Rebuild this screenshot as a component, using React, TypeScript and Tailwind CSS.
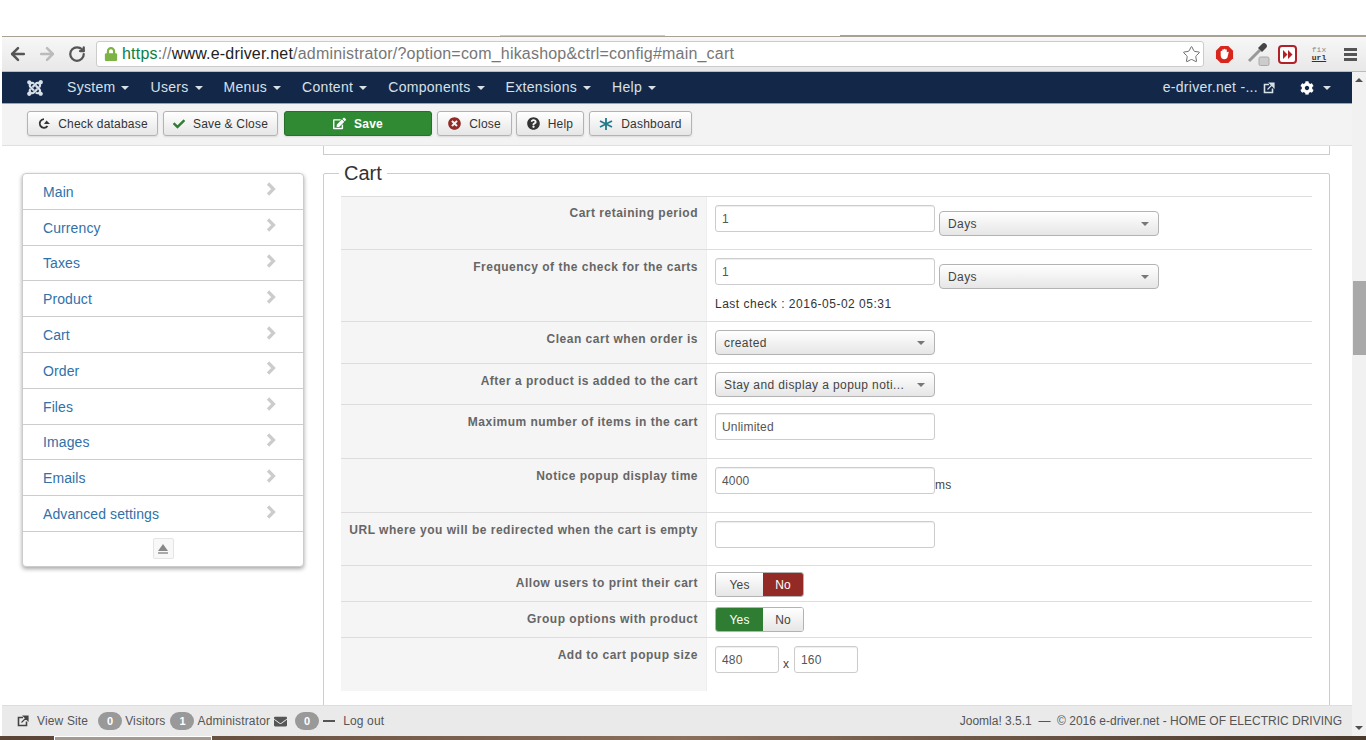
import { ArrowLeft, ArrowRight, RotateCw, Star } from 'lucide-react'
import { FaJoomla, FaCheck, FaEdit, FaTimesCircle, FaQuestionCircle, FaCog, FaEnvelope, FaLock } from 'react-icons/fa'

const NAV = ['System', 'Users', 'Menus', 'Content', 'Components', 'Extensions', 'Help']
const SIDE = ['Main', 'Currency', 'Taxes', 'Product', 'Cart', 'Order', 'Files', 'Images', 'Emails', 'Advanced settings']

function Caret({ className = 'border-t-[#d8e0e8]' }: { className?: string }) {
  return <span className={`inline-block w-0 h-0 border-x-[4px] border-x-transparent border-t-[4px] ${className}`} />
}

function OutIcon({ className }: { className: string }) {
  return (
    <svg width="12" height="12" viewBox="0 0 12 12" className={className}>
      <path d="M6 2.500H1.500v8h8V6.500" fill="none" stroke="currentColor" strokeWidth="1.600" />
      <path d="M4.500 7.500 9 3M6.500 1h4.500v4.500z" fill="currentColor" stroke="currentColor" strokeWidth="1.200" />
    </svg>
  )
}

function ToolBtn({ className, icon, label }: { className: string; icon: React.ReactNode; label: string }) {
  return (
    <button className={`h-[25px] flex items-center justify-center gap-[8px] rounded-[3px] border border-[#b3b3b3] bg-gradient-to-b from-white to-[#e6e6e6] text-[12px] tracking-[0.2px] text-[#333] shadow-[0_1px_2px_rgba(0,0,0,0.1)] ${className}`}>
      {icon}
      {label}
    </button>
  )
}

function TextInput({ value, className }: { value: string; className: string }) {
  return (
    <div className={`h-[27px] flex items-center px-[6px] bg-white border border-[#ccc] rounded-[3px] text-[12px] tracking-[0.2px] text-[#555] shadow-[inset_0_1px_1px_rgba(0,0,0,0.07)] ${className}`}>
      {value}
    </div>
  )
}

function Select({ value, className }: { value: string; className: string }) {
  return (
    <div className={`h-[25px] flex items-center justify-between pl-[8px] pr-[9px] border border-[#b3b3b3] rounded-[4px] bg-gradient-to-b from-white to-[#e6e6e6] text-[12px] tracking-[0.4px] text-[#444] ${className}`}>
      <span className="whitespace-nowrap">{value}</span>
      <Caret className="border-t-[#777] shrink-0" />
    </div>
  )
}

function Toggle({ on, className }: { on: 'yes' | 'no'; className: string }) {
  return (
    <div className={`flex h-[25px] w-[89px] rounded-[3px] overflow-hidden text-[12px] tracking-[0.2px] border border-[#b3b3b3] ${className}`}>
      <div className={`w-[47px] flex items-center justify-center ${on === 'yes' ? 'bg-[#2f7d32] text-white' : 'bg-gradient-to-b from-white to-[#e6e6e6] text-[#444]'}`}>Yes</div>
      <div className={`flex-1 flex items-center justify-center ${on === 'no' ? 'bg-[#942a25] text-white' : 'bg-gradient-to-b from-white to-[#e6e6e6] text-[#444]'}`}>No</div>
    </div>
  )
}

function Row({ label, h, children, labelPt = 'pt-[8px]' }: { label: string; h: string; children: React.ReactNode; labelPt?: string }) {
  return (
    <div className={`flex border-t border-[#ddd] ${h}`}>
      <div className={`w-[366px] shrink-0 bg-[#f5f5f5] border-r border-[#eee] pr-[8px] text-right text-[12px] font-bold tracking-[0.5px] text-[#666] ${labelPt}`}>{label}</div>
      <div className="flex-1 pl-[8px] pt-[8px]">{children}</div>
    </div>
  )
}

function Badge({ n }: { n: string }) {
  return <span className="w-[24px] h-[18px] rounded-full bg-[#999] text-white text-[11px] font-bold flex items-center justify-center">{n}</span>
}

export default function App() {
  return (
    <div className="w-[1366px] h-[740px] overflow-hidden bg-white flex flex-col font-['Liberation_Sans',Arial,sans-serif]">
      {/* page above the browser */}
      <div className="h-[36px] shrink-0 flex items-end">
        <div className="w-[500px]" />
        <div className="w-[165px] h-px bg-[#ccc]" />
        <div className="w-[175px]" />
        <div className="flex-1 h-px bg-[#a8a294]" />
      </div>

      {/* browser chrome */}
      <div className="h-[36px] shrink-0 ml-[2px] flex items-center bg-gradient-to-b from-[#f7f7f7] to-[#e8e8e8] border-t border-[#a8a294] border-b border-b-[#bbb]">
        <ArrowLeft size={20} strokeWidth={3} className="ml-[6px] text-[#555]" />
        <ArrowRight size={20} strokeWidth={3} className="ml-[9px] text-[#bbb]" />
        <RotateCw size={18} strokeWidth={3} className="ml-[11px] text-[#555]" />
        <div className="ml-[10px] w-[1108px] h-[26px] bg-white border border-[#ccc] rounded-[3px] flex items-center pl-[7px] pr-[2px]">
          <FaLock size={14} className="text-[#7cb342] shrink-0" />
          <div className="ml-[4px] flex-1 text-[16px] tracking-[0.2px] text-[#777] whitespace-nowrap">
            <span className="text-[#0b8043]">https</span>://<span className="text-[#222]">www.e-driver.net</span>/administrator/?option=com_hikashop&amp;ctrl=config#main_cart
          </div>
          <Star size={19} strokeWidth={1.2} className="text-[#666]" />
        </div>
        {/* extension icons */}
        <svg width="19" height="19" viewBox="0 0 20 20" className="ml-[11px]">
          <polygon points="6,1 14,1 19,6 19,14 14,19 6,19 1,14 1,6" fill="#d8261c" />
          <path d="M6 11V6.500a1 1 0 0 1 1.600 0V5a1 1 0 0 1 1.600 0v-.5a1 1 0 0 1 1.600 0V5a1 1 0 0 1 1.600 0v3l1-.8c.8-.4 1.300.3.900 1L13 13.500c-.7 1-1.500 1.500-3 1.500-2.500 0-4-1.500-4-4z" fill="#fff" />
        </svg>
        <svg width="24" height="24" viewBox="0 0 24 24" className="ml-[12px]">
          <path d="M3 19 14 8" stroke="#999" strokeWidth="3" />
          <path d="M12 6l4-4a2.500 2.500 0 0 1 4 4l-4 4z" fill="#444" />
          <rect x="13" y="15" width="10" height="8.500" rx="1.500" fill="#ccc" stroke="#aaa" />
        </svg>
        <svg width="19" height="19" viewBox="0 0 19 19" className="ml-[8px]">
          <rect x="1" y="1" width="17" height="17" rx="3" fill="#fff" stroke="#b3202a" strokeWidth="2" />
          <path d="M5 5l4.500 4.500L5 14zM10 5l4.500 4.500L10 14z" fill="#b3202a" />
        </svg>
        <div className="ml-[13px] w-[18px] flex flex-col items-center font-['Liberation_Mono',monospace] text-[8px] leading-[8px]">
          <span className="text-[#888]">fix</span>
          <span className="font-bold text-[#333] underline">url</span>
        </div>
        <div className="ml-[16px] w-[13px] flex flex-col gap-[2px]">
          <span className="h-[3px] bg-[#555]" />
          <span className="h-[3px] bg-[#555]" />
          <span className="h-[3px] bg-[#555]" />
        </div>
      </div>

      <div className="flex-1 min-h-0 ml-[2px] flex">
        <div className="flex-1 min-w-0 flex flex-col">
          {/* admin nav */}
          <div className="h-[32px] shrink-0 bg-[#132849] border-b border-[#9aa5b1] flex items-center text-[14px] tracking-[0.3px] text-[#d8e0e8]">
            <FaJoomla size={18} className="ml-[24px] mr-[23px] text-[#d8e0e8]" />
            <div className="flex gap-[21px]">
              {NAV.map(n => (
                <span key={n} className="flex items-center gap-[6px]">{n}<Caret /></span>
              ))}
            </div>
            <span className="ml-auto flex items-center gap-[5px]">e-driver.net -...<OutIcon className="text-[#d8e0e8]" /></span>
            <FaCog size={14} className="ml-[25px] text-white" />
            <Caret className="ml-[9px] mr-[21px] border-t-[#d8e0e8]" />
          </div>

          {/* toolbar */}
          <div className="h-[42px] shrink-0 bg-[#f3f3f3] border-b border-[#e0e0e0] flex items-center pl-[25px] pb-[2px]">
            <ToolBtn className="w-[131px]" label="Check database" icon={
              <svg width="13" height="13" viewBox="0 0 13 13"><path d="M7 2.200A4.300 4.300 0 1 0 10.500 9" fill="none" stroke="#333" strokeWidth="1.800" /><path d="M7 7h6L9.500 3.500z" fill="#333" /></svg>
            } />
            <ToolBtn className="ml-[5px] w-[115px]" label="Save & Close" icon={<FaCheck size={12} className="text-[#2f7d32]" />} />
            <ToolBtn className="ml-[6px] w-[148px] !bg-none !bg-[#2f8a33] !border-[#25702a] !text-white font-bold" label="Save" icon={<FaEdit size={13} />} />
            <ToolBtn className="ml-[5px] w-[75px]" label="Close" icon={<FaTimesCircle size={13} className="text-[#942a25]" />} />
            <ToolBtn className="ml-[4px] w-[68px]" label="Help" icon={<FaQuestionCircle size={13} className="text-[#333]" />} />
            <ToolBtn className="ml-[5px] w-[103px]" label="Dashboard" icon={
              <svg width="14" height="14" viewBox="0 0 14 14"><path d="M7 1v12M1 4l12 6M1 10l12-6" stroke="#1f7a8c" strokeWidth="1.800" /></svg>
            } />
          </div>

          {/* content */}
          <div className="flex-1 min-h-0 flex overflow-hidden">
            <div className="w-[321px] shrink-0 pl-[20px] pt-[27px]">
              <div className="w-[282px] border border-[#ccc] rounded-[4px] bg-white shadow-[0_2px_4px_rgba(0,0,0,0.35)]">
                {SIDE.map(s => (
                  <div key={s} className="h-[35.8px] flex items-center justify-between pl-[20px] pr-[27px] border-b border-[#ccc] text-[14px] tracking-[0.1px] text-[#3071a9]">
                    <span className="pt-[2px]">{s}</span>
                    <svg width="10" height="14" viewBox="0 0 10 14" className="-mt-[4px]">
                      <path d="M2 1.500 7.500 7 2 12.500" fill="none" stroke="#ccc" strokeWidth="3.200" />
                    </svg>
                  </div>
                ))}
                <div className="h-[34px] flex items-center justify-center">
                  <div className="w-[21px] h-[21px] border border-[#e5e5e5] rounded-[2px] bg-[#f8f8f8] flex flex-col items-center justify-center gap-[1px]">
                    <span className="w-0 h-0 border-x-[5px] border-x-transparent border-b-[7px] border-b-[#888]" />
                    <span className="w-[10px] h-[2px] bg-[#aaa]" />
                  </div>
                </div>
              </div>
            </div>

            <div className="flex-1 min-w-0 pr-[22px]">
              <div className="h-[9px] border-x border-b border-[#ccc]" />
              <fieldset className="mt-[6px] h-[620px] border border-[#ccc] rounded-[2px] px-[17px]">
                <legend className="-ml-[2px] px-[5px] text-[20px] leading-[24px] text-[#333]">Cart</legend>
                <div className="pt-[11px]">
                  <Row label="Cart retaining period" h="h-[53px]" labelPt="pt-[7px]">
                    <div className="flex gap-[4px]">
                      <TextInput value="1" className="w-[220px]" />
                      <Select value="Days" className="w-[220px] mt-[6px]" />
                    </div>
                  </Row>
                  <Row label="Frequency of the check for the carts" h="h-[72px]">
                    <div className="flex gap-[4px]">
                      <TextInput value="1" className="w-[220px]" />
                      <Select value="Days" className="w-[220px] mt-[6px]" />
                    </div>
                    <div className="mt-[6px] text-[12px] tracking-[0.5px] text-[#333]">Last check : 2016-05-02 05:31</div>
                  </Row>
                  <Row label="Clean cart when order is" h="h-[42px]">
                    <Select value="created" className="w-[220px]" />
                  </Row>
                  <Row label="After a product is added to the cart" h="h-[41px]">
                    <Select value="Stay and display a popup noti..." className="w-[220px]" />
                  </Row>
                  <Row label="Maximum number of items in the cart" h="h-[54px]">
                    <TextInput value="Unlimited" className="w-[220px]" />
                  </Row>
                  <Row label="Notice popup display time" h="h-[54px]">
                    <div className="flex items-end">
                      <TextInput value="4000" className="w-[220px]" />
                      <span className="text-[12px] tracking-[0.3px] text-[#444]">ms</span>
                    </div>
                  </Row>
                  <Row label="URL where you will be redirected when the cart is empty" h="h-[53px]">
                    <TextInput value="" className="w-[220px]" />
                  </Row>
                  <Row label="Allow users to print their cart" h="h-[36px]">
                    <Toggle on="no" className="-mt-[2px]" />
                  </Row>
                  <Row label="Group options with product" h="h-[36px]">
                    <Toggle on="yes" className="-mt-[3px]" />
                  </Row>
                  <Row label="Add to cart popup size" h="h-[54px]">
                    <div className="flex items-end">
                      <TextInput value="480" className="w-[64px]" />
                      <span className="ml-[4px] mr-[5px] text-[12px] text-[#444]">x</span>
                      <TextInput value="160" className="w-[64px]" />
                    </div>
                  </Row>
                </div>
              </fieldset>
            </div>
          </div>

          {/* status bar */}
          <div className="h-[31px] shrink-0 bg-[#eaeaea] border-t border-[#ddd] flex items-center pl-[15px] pr-[10px] text-[12px] text-[#555]">
            <OutIcon className="text-[#444]" />
            <span className="ml-[8px] tracking-[0.15px]">View Site</span>
            <span className="ml-[10px]"><Badge n="0" /></span>
            <span className="ml-[3px] tracking-[0.15px]">Visitors</span>
            <span className="ml-[5px]"><Badge n="1" /></span>
            <span className="ml-[3px] tracking-[0.15px]">Administrator</span>
            <FaEnvelope size={13} className="ml-[4px] text-[#555]" />
            <span className="ml-[8px]"><Badge n="0" /></span>
            <span className="ml-[4px] w-[12px] h-[2px] bg-[#555]" />
            <span className="ml-[8px] tracking-[0.15px]">Log out</span>
            <span className="ml-auto">Joomla! 3.5.1 &nbsp;— &nbsp;© 2016 e-driver.net - HOME OF ELECTRIC DRIVING</span>
          </div>
        </div>

        {/* scrollbar */}
        <div className="w-[14px] shrink-0 bg-[#f1f1f1] flex flex-col items-center">
          <span className="mt-[6px] w-0 h-0 border-x-[4px] border-x-transparent border-b-[4px] border-b-[#505050]" />
          <div className="mt-[199px] ml-[1px] w-[13px] h-[74px] bg-[#a9a9a9]" />
          <span className="mt-auto mb-[6px] w-0 h-0 border-x-[4px] border-x-transparent border-t-[4px] border-t-[#505050]" />
        </div>
      </div>

      {/* desktop peeking out below */}
      <div className="h-[4px] shrink-0 flex bg-gradient-to-r from-[#5a4436] via-[#8a6f5c] to-[#4a3a2e]">
        <div className="ml-[54px] w-[158px] bg-[#a59a8f] border-x border-t border-white" />
      </div>
    </div>
  )
}
